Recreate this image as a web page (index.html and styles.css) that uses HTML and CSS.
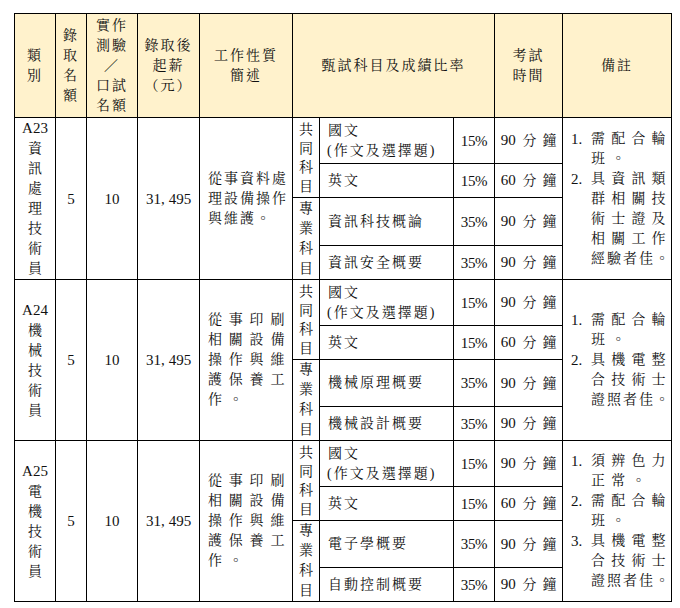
FILE: index.html
```html
<!DOCTYPE html>
<html lang="zh-Hant">
<head>
<meta charset="utf-8">
<title>甄試類別</title>
<link rel="stylesheet" href="styles.css">
</head>
<body>
<table class="grid">
  <colgroup>
    <col class="c-cat"><col class="c-num"><col class="c-oral"><col class="c-pay"><col class="c-desc"><col class="c-grp"><col class="c-subj"><col class="c-pct"><col class="c-time"><col class="c-note">
  </colgroup>
  <thead>
    <tr class="head">
      <th>類<br>別</th>
      <th>錄<br>取<br>名<br>額</th>
      <th>實作<br>測驗<br>／<br>口試<br>名額</th>
      <th>錄取後<br>起薪<br>（元）</th>
      <th>工作性質<br>簡述</th>
      <th colspan="3">甄試科目及成績比率</th>
      <th>考試<br>時間</th>
      <th>備註</th>
    </tr>
  </thead>
  <tbody>
    <tr class="s1">
      <td rowspan="4" class="cat"><span class="code">A23</span><br>資<br>訊<br>處<br>理<br>技<br>術<br>員</td>
      <td rowspan="4" class="num">5</td>
      <td rowspan="4" class="num">10</td>
      <td rowspan="4" class="num">31<span class="cm">,</span>495</td>
      <td rowspan="4" class="desc">從事資料處<br>理設備操作<br>與維護。</td>
      <td rowspan="2" class="grp g1">共<br>同<br>科<br>目</td>
      <td class="subj">國文<br><span class="paren">(作文及選擇題)</span></td>
      <td class="pct">15%</td>
      <td class="tm">90 <span class="u">分鐘</span></td>
      <td rowspan="4" class="note">
        <div class="item"><span class="no">1.</span><div class="txt"><div class="ln w">需配合輪</div><div class="ln w">班。</div></div></div>
        <div class="item"><span class="no">2.</span><div class="txt"><div class="ln w">具資訊類</div><div class="ln w">群相關技</div><div class="ln w">術士證及</div><div class="ln w">相關工作</div><div class="ln">經驗者佳。</div></div></div>
      </td>
    </tr>
    <tr class="s2">
      <td class="subj">英文</td>
      <td class="pct">15%</td>
      <td class="tm">60 <span class="u">分鐘</span></td>
    </tr>
    <tr class="s3">
      <td rowspan="2" class="grp g2">專<br>業<br>科<br>目</td>
      <td class="subj">資訊科技概論</td>
      <td class="pct">35%</td>
      <td class="tm">90 <span class="u">分鐘</span></td>
    </tr>
    <tr class="s4">
      <td class="subj">資訊安全概要</td>
      <td class="pct">35%</td>
      <td class="tm">90 <span class="u">分鐘</span></td>
    </tr>

    <tr class="s1">
      <td rowspan="4" class="cat"><span class="code">A24</span><br>機<br>械<br>技<br>術<br>員</td>
      <td rowspan="4" class="num">5</td>
      <td rowspan="4" class="num">10</td>
      <td rowspan="4" class="num">31<span class="cm">,</span>495</td>
      <td rowspan="4" class="desc wide">從事印刷<br>相關設備<br>操作與維<br>護保養工<br>作。</td>
      <td rowspan="2" class="grp g1">共<br>同<br>科<br>目</td>
      <td class="subj">國文<br><span class="paren">(作文及選擇題)</span></td>
      <td class="pct">15%</td>
      <td class="tm">90 <span class="u">分鐘</span></td>
      <td rowspan="4" class="note">
        <div class="item"><span class="no">1.</span><div class="txt"><div class="ln w">需配合輪</div><div class="ln w">班。</div></div></div>
        <div class="item"><span class="no">2.</span><div class="txt"><div class="ln w">具機電整</div><div class="ln w">合技術士</div><div class="ln">證照者佳。</div></div></div>
      </td>
    </tr>
    <tr class="s2">
      <td class="subj">英文</td>
      <td class="pct">15%</td>
      <td class="tm">60 <span class="u">分鐘</span></td>
    </tr>
    <tr class="s3">
      <td rowspan="2" class="grp g2">專<br>業<br>科<br>目</td>
      <td class="subj">機械原理概要</td>
      <td class="pct">35%</td>
      <td class="tm">90 <span class="u">分鐘</span></td>
    </tr>
    <tr class="s4">
      <td class="subj">機械設計概要</td>
      <td class="pct">35%</td>
      <td class="tm">90 <span class="u">分鐘</span></td>
    </tr>

    <tr class="s1">
      <td rowspan="4" class="cat"><span class="code">A25</span><br>電<br>機<br>技<br>術<br>員</td>
      <td rowspan="4" class="num">5</td>
      <td rowspan="4" class="num">10</td>
      <td rowspan="4" class="num">31<span class="cm">,</span>495</td>
      <td rowspan="4" class="desc wide">從事印刷<br>相關設備<br>操作與維<br>護保養工<br>作。</td>
      <td rowspan="2" class="grp g1">共<br>同<br>科<br>目</td>
      <td class="subj">國文<br><span class="paren">(作文及選擇題)</span></td>
      <td class="pct">15%</td>
      <td class="tm">90 <span class="u">分鐘</span></td>
      <td rowspan="4" class="note">
        <div class="item"><span class="no">1.</span><div class="txt"><div class="ln w">須辨色力</div><div class="ln w">正常。</div></div></div>
        <div class="item"><span class="no">2.</span><div class="txt"><div class="ln w">需配合輪</div><div class="ln w">班。</div></div></div>
        <div class="item"><span class="no">3.</span><div class="txt"><div class="ln w">具機電整</div><div class="ln w">合技術士</div><div class="ln">證照者佳。</div></div></div>
      </td>
    </tr>
    <tr class="s2">
      <td class="subj">英文</td>
      <td class="pct">15%</td>
      <td class="tm">60 <span class="u">分鐘</span></td>
    </tr>
    <tr class="s3">
      <td rowspan="2" class="grp g2">專<br>業<br>科<br>目</td>
      <td class="subj">電子學概要</td>
      <td class="pct">35%</td>
      <td class="tm">90 <span class="u">分鐘</span></td>
    </tr>
    <tr class="s4">
      <td class="subj">自動控制概要</td>
      <td class="pct">35%</td>
      <td class="tm">90 <span class="u">分鐘</span></td>
    </tr>
  </tbody>
</table>
</body>
</html>
```

FILE: styles.css
```css
html, body {
  margin: 0;
  background: #ffffff;
}

body {
  padding: 13px 0 0 14px;
  font-family: "Liberation Serif", "Noto Serif CJK TC", "Noto Sans CJK TC", serif;
  font-size: 14px;
  color: #111111;
}

.grid {
  border-collapse: collapse;
  table-layout: fixed;
  width: 658px;
}

.c-cat { width: 41px; }
.c-num { width: 31px; }
.c-oral { width: 51px; }
.c-pay { width: 62px; }
.c-desc { width: 93px; }
.c-grp { width: 27px; }
.c-subj { width: 134px; }
.c-pct { width: 41px; }
.c-time { width: 68px; }
.c-note { width: 109px; }

.grid th,
.grid td {
  border: 1px solid #000000;
  padding: 0;
  line-height: 20px;
  text-align: center;
  vertical-align: middle;
  letter-spacing: 2px;
  white-space: nowrap;
}

.grid th {
  background: #fff2cc;
  font-weight: normal;
}

.head { height: 104px; }
.s1 { height: 46px; }
.s2 { height: 34px; }
.s3 { height: 47px; }
.s4 { height: 34px; }

.grid td.cat { letter-spacing: 0; }
.code { font-size: 15px; letter-spacing: 0; }

.grid td.num {
  font-size: 15px;
  letter-spacing: 0;
}

.cm { margin-right: 4px; }

.grid td.desc {
  text-align: left;
  padding-left: 8px;
}

.grid td.desc.wide { letter-spacing: 6.8px; }

.grid td.grp { letter-spacing: 0; }
.grid td.g1 { line-height: 19px; }
.grid td.g2 { line-height: 20px; }

.grid td.subj {
  text-align: left;
  padding-left: 8px;
}

.paren { margin-left: -1px; }

.grid td.pct {
  font-size: 15px;
  letter-spacing: -0.3px;
}

.grid td.tm {
  font-size: 15px;
  letter-spacing: 0;
}

.tm .u {
  font-size: 14px;
  letter-spacing: 6px;
  margin-left: 3px;
  margin-right: -6px;
}

.grid td.note {
  text-align: left;
  padding-left: 8px;
}

.item {
  display: flex;
}

.no {
  flex: none;
  width: 20px;
  font-size: 15px;
  letter-spacing: 0;
}

.txt {
  flex: 1;
}

.ln { white-space: nowrap; }
.ln.w { letter-spacing: 6.2px; }
```
